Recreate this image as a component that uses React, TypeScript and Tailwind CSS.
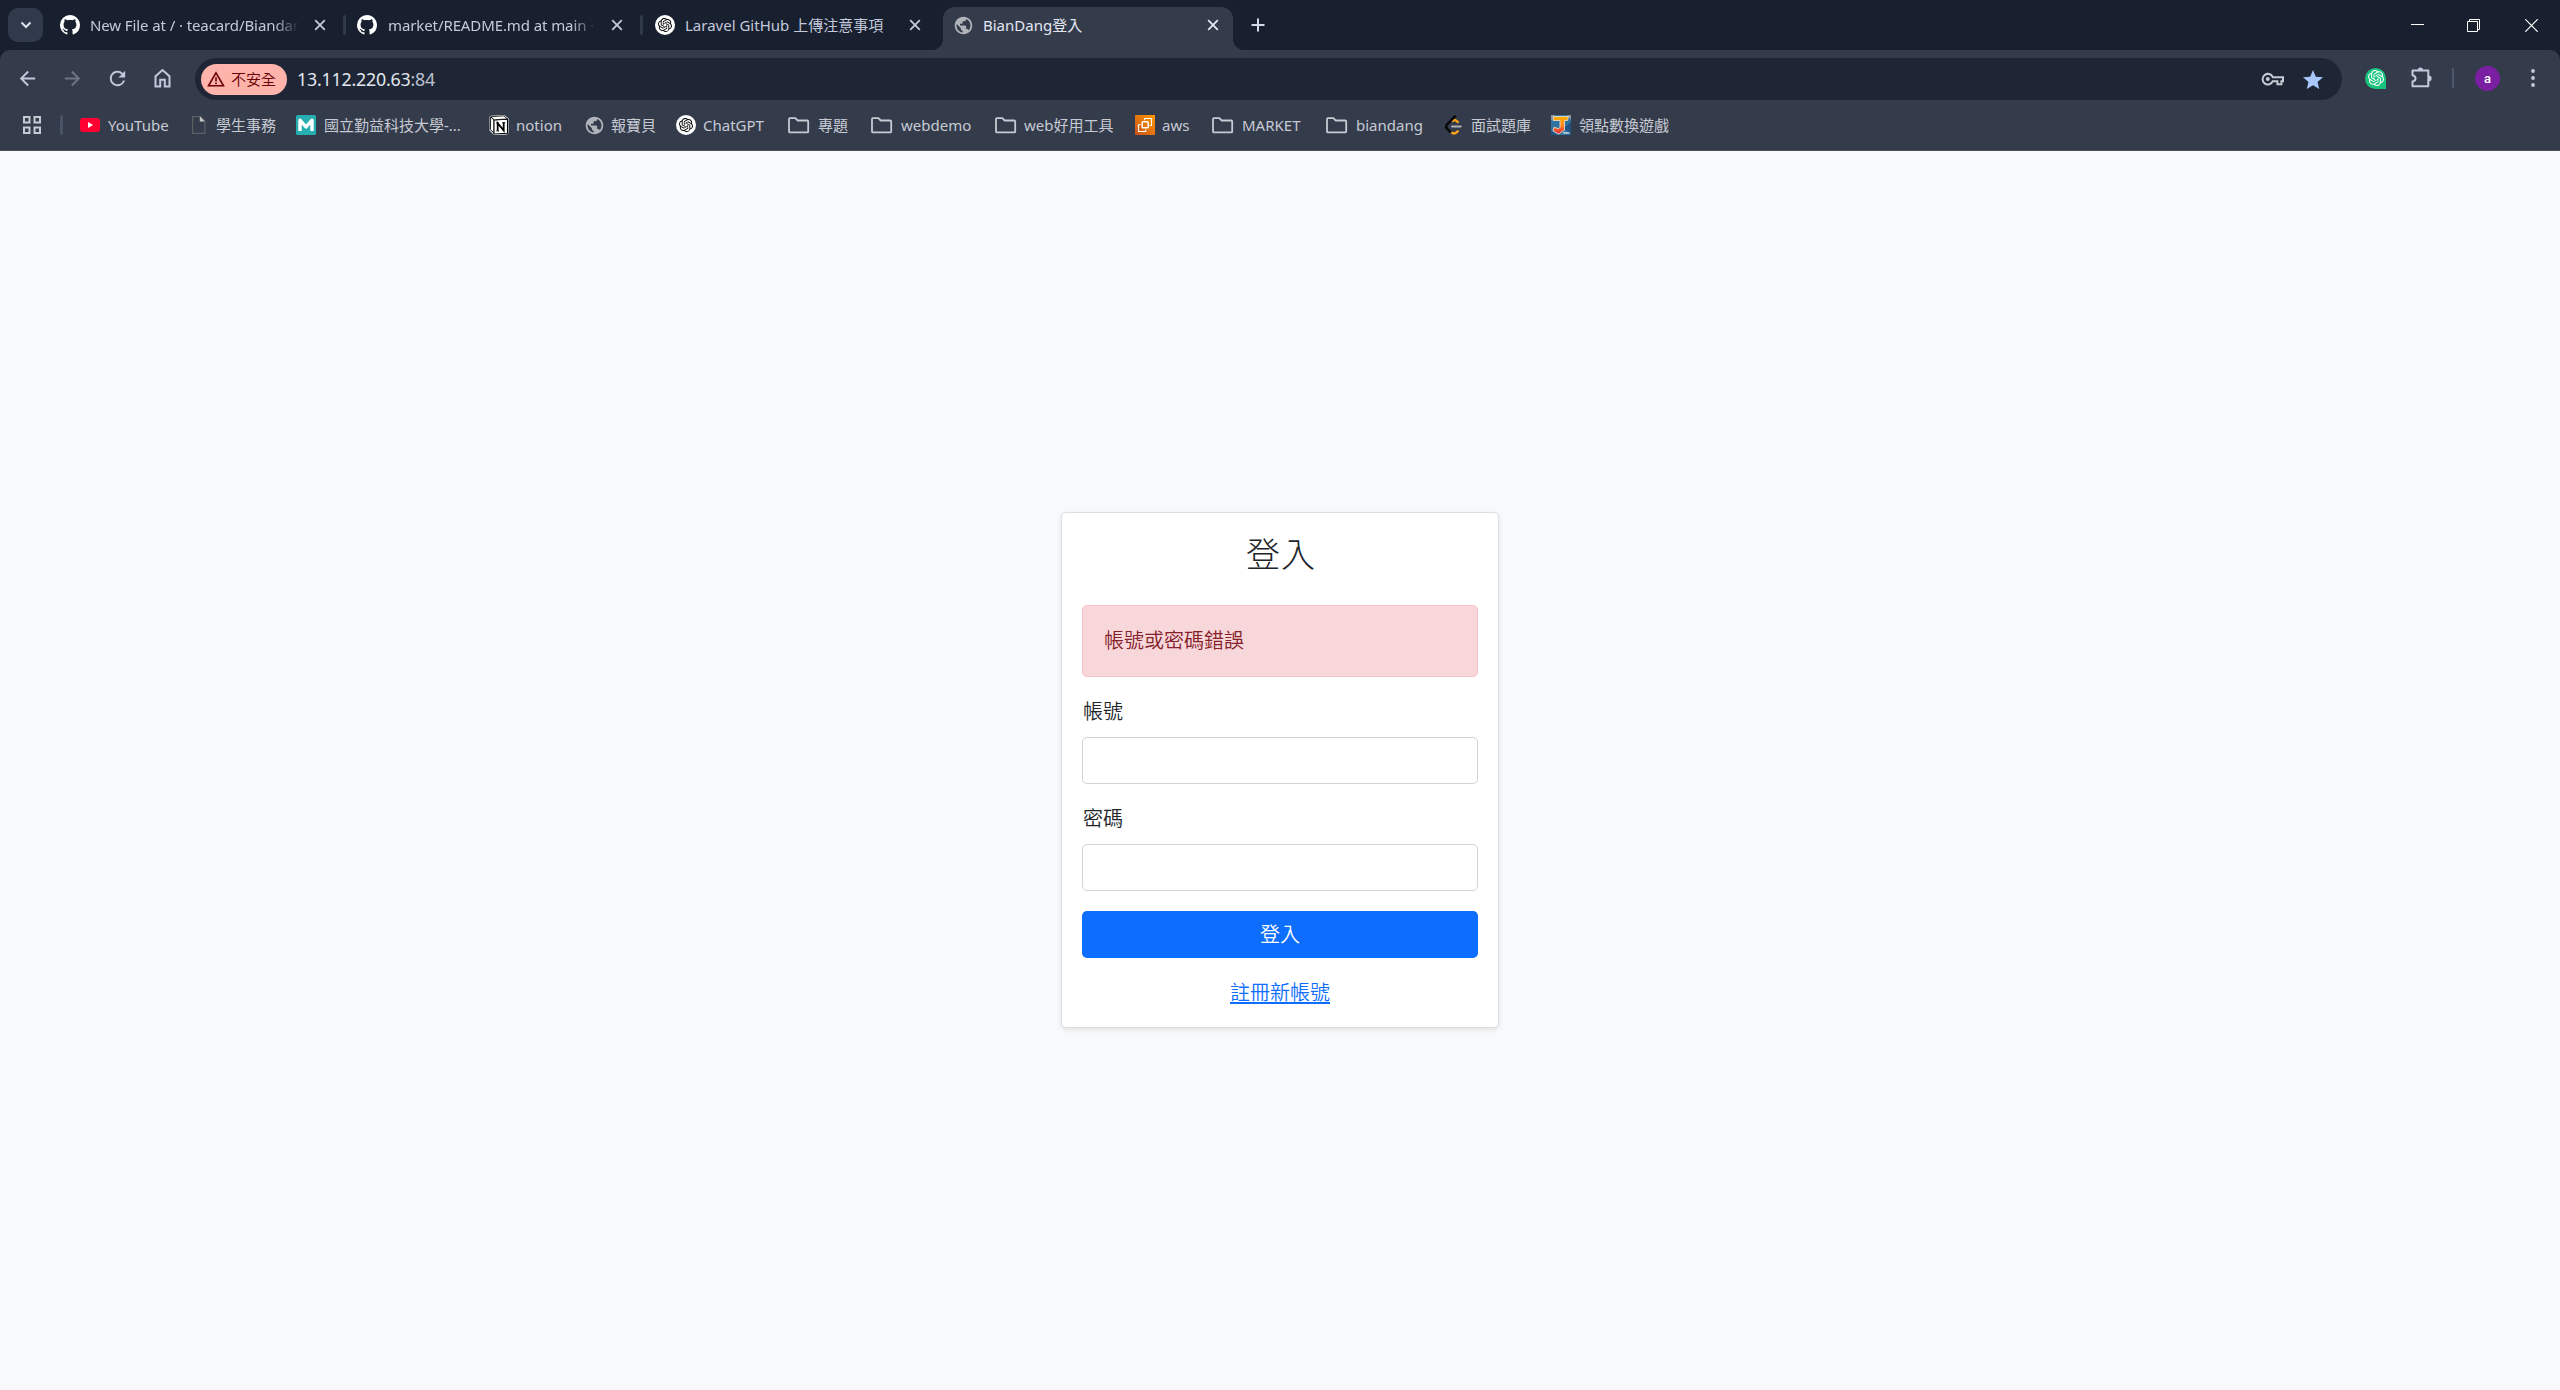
import React from "react";
import { SiOpenai } from "react-icons/si";
import { VscGithubInverted } from "react-icons/vsc";
import { MdPublic, MdArrowBack, MdArrowForward, MdRefresh, MdStar } from "react-icons/md";

function Cross({ className = "" }: { className?: string }) {
  return (
    <svg viewBox="0 0 12 12" className={`h-3 w-3 shrink-0 ${className}`} stroke="currentColor" strokeWidth="1.8" fill="none">
      <path d="M1.2 1.2l9.6 9.6M10.8 1.2l-9.6 9.6" />
    </svg>
  );
}

function OpenAiBadge() {
  return (
    <span className="flex h-5 w-5 shrink-0 items-center justify-center rounded-full bg-white text-black">
      <SiOpenai className="h-[14px] w-[14px]" />
    </span>
  );
}

function GlobeIcon() {
  return (
    <span className="flex h-5 w-5 shrink-0 items-center justify-center">
      <MdPublic className="h-[21px] w-[21px] shrink-0 text-[#b0b3ba]" />
    </span>
  );
}

function FolderIcon() {
  return (
    <svg viewBox="0 0 22 20" className="h-5 w-[22px] shrink-0" fill="none" stroke="#c7cad3" strokeWidth="1.8" strokeLinejoin="round">
      <path d="M1 4.200q0-1 1-1h5.400l2.300 2.300h9.500q1 0 1 1v9.900q0 1-1 1H2q-1 0-1-1z" />
    </svg>
  );
}

function YouTubeIcon() {
  return (
    <svg viewBox="0 0 20 20" className="h-5 w-5 shrink-0">
      <rect x="0" y="3" width="20" height="14" rx="3" fill="#ff0033" />
      <path d="M8 7l5 3-5 3z" fill="#fff" />
    </svg>
  );
}

function FileIcon() {
  return (
    <svg viewBox="0 0 20 20" className="h-5 w-5 shrink-0" fill="none">
      <path d="M3.600 1.600h8l4.300 4.300v12.500H3.600z" stroke="#5d5f63" strokeWidth="1.200" />
      <path d="M10.800 1.200v5.200h5z" fill="#c8c8c8" />
    </svg>
  );
}

function MyIcon() {
  return (
    <svg viewBox="0 0 20 20" className="h-5 w-5 shrink-0">
      <rect width="20" height="20" rx="1.500" fill="#27aeb1" />
      <path d="M4 16V5.200L10 12l6-6.800V16" fill="none" stroke="#fff" strokeWidth="3.400" strokeLinejoin="round" />
    </svg>
  );
}

function NotionIcon() {
  return (
    <svg viewBox="0 0 20 20" className="h-5 w-5 shrink-0">
      <path d="M1.500.8L15 0l4.500 3.200V18L18 19.400 5 20 .6 15.500V1.800z" fill="#fff" />
      <path d="M1.700 2l3.400 3v13.300L1.400 14.600z" fill="#fff" stroke="#000" strokeWidth=".9" />
      <path d="M5 5l13.500-.8v14L5 19z" fill="#fff" stroke="#000" strokeWidth="1.100" />
      <path d="M1.700 1.700L14.800.9l3.700 3L5.200 4.800z" fill="#fff" stroke="#000" strokeWidth=".8" />
      <path d="M8.700 15.700V8.200l6 7.200V7.800" fill="none" stroke="#000" strokeWidth="1.800" />
      <path d="M7.200 8h2.600M13.200 7.700h3M7.400 15.900h2.700" stroke="#000" strokeWidth="1" />
    </svg>
  );
}

function AwsIcon() {
  return (
    <svg viewBox="0 0 20 20" className="h-5 w-5 shrink-0">
      <defs>
        <linearGradient id="aws" x1="0" y1="1" x2="1" y2="0">
          <stop offset="0" stopColor="#c8511b" />
          <stop offset="1" stopColor="#ff9900" />
        </linearGradient>
      </defs>
      <rect width="20" height="20" fill="url(#aws)" />
      <g fill="none" stroke="#fff" strokeWidth="1.100">
        <rect x="7.200" y="6.800" width="6" height="6" rx=".8" strokeWidth="1.500" />
        <path d="M5.600 9.800H3.500v6.700h7.200v-2M9.500 5.200V3.500h7v7h-2" />
      </g>
    </svg>
  );
}

function LeetIcon() {
  return (
    <svg viewBox="0 0 20 20" className="h-5 w-5 shrink-0" fill="none" strokeWidth="2.400" strokeLinecap="round">
      <path d="M12.800 7l-1.700-1.400q-1.600-1.200-3.400.3" stroke="#ffa116" />
      <path d="M12.800 16.300q-2.800 3.200-5.600 1.600" stroke="#ffa116" />
      <path d="M10 1.400L2 9.500q-1.800 2 0 4l3 3.200" stroke="#050505" />
      <path d="M7 11.500h8.800" stroke="#b3b3b3" strokeWidth="1.800" />
    </svg>
  );
}

function GameIcon() {
  return (
    <svg viewBox="0 0 20 20" className="h-5 w-5 shrink-0">
      <defs>
        <linearGradient id="game" x1="0" y1="0" x2="0" y2="1">
          <stop offset="0" stopColor="#ffb000" />
          <stop offset=".5" stopColor="#ff8a1f" />
          <stop offset="1" stopColor="#e3223f" />
        </linearGradient>
      </defs>
      <rect width="20" height="20" fill="#2f73a0" />
      <path d="M0 0h4L0 6zM16 0h4v5z" fill="#8b979b" />
      <path d="M0 15l6 5H0zM13 13l7-6v13z" fill="#1f5480" />
      <path d="M2.500 1.500h15l-1 4h-3v9.500l-5.700 4L2 16l1-3.800 4.500 1.500 1.500-1.500V5.500H2z" fill="url(#game)" stroke="#f6e3d0" strokeWidth=".8" />
      <path d="M12.500 17.800h6" stroke="#e6edf2" strokeWidth="1.800" strokeDasharray="1.400 .5" />
    </svg>
  );
}

const bookmarks: { icon: React.ReactNode; text: string; item: string }[] = [
  { icon: <YouTubeIcon />, text: "YouTube", item: "w-[109px] gap-2" },
  { icon: <FileIcon />, text: "學生事務", item: "w-[107px] gap-[7px]" },
  { icon: <MyIcon />, text: "國立勤益科技大學-...", item: "w-[193px] gap-2" },
  { icon: <NotionIcon />, text: "notion", item: "w-[95px] gap-[7px]" },
  { icon: <GlobeIcon />, text: "報寶貝", item: "w-[92px] gap-[7px]" },
  { icon: <OpenAiBadge />, text: "ChatGPT", item: "w-[112px] gap-[7px]" },
  { icon: <FolderIcon />, text: "專題", item: "w-[83px] gap-2" },
  { icon: <FolderIcon />, text: "webdemo", item: "w-[124px] gap-2" },
  { icon: <FolderIcon />, text: "web好用工具", item: "w-[140px] gap-[7px]" },
  { icon: <AwsIcon />, text: "aws", item: "w-[77px] gap-[7px]" },
  { icon: <FolderIcon />, text: "MARKET", item: "w-[114px] gap-2" },
  { icon: <FolderIcon />, text: "biandang", item: "w-[119px] gap-2" },
  { icon: <LeetIcon />, text: "面試題庫", item: "w-[106px] gap-[6px]" },
  { icon: <GameIcon />, text: "領點數換遊戲", item: "w-[130px] gap-2" },
];

function TabStrip() {
  return (
    <div className="flex h-[50px] items-center bg-[#18202f] text-[15px] text-[#c3c9dc]">
      <div className="ml-2 flex h-[34px] w-[35px] items-center justify-center rounded-[10px] bg-[#313a4a] text-[#dde2f0]">
        <svg viewBox="0 0 12 8" className="h-2 w-3" fill="none" stroke="currentColor" strokeWidth="2">
          <path d="M1.500 1.500L6 6l4.500-4.500" />
        </svg>
      </div>
      <div className="ml-[17px] flex w-[283px] items-center">
        <VscGithubInverted className="h-5 w-5 shrink-0 text-white" />
        <span className="ml-[10px] w-[209px] overflow-hidden whitespace-nowrap tracking-[-0.1px] [mask-image:linear-gradient(to_right,black_88%,transparent)]">
          New File at / · teacard/Biandang
        </span>
        <Cross className="ml-[15px]" />
      </div>
      <div className="h-5 w-[3px] rounded-full bg-[#2f3949]" />
      <div className="ml-[11px] flex w-[283px] items-center">
        <VscGithubInverted className="h-5 w-5 shrink-0 text-white" />
        <span className="ml-[11px] w-[208px] overflow-hidden whitespace-nowrap tracking-[-0.1px] [mask-image:linear-gradient(to_right,black_88%,transparent)]">
          market/README.md at main ·
        </span>
        <Cross className="ml-[15px]" />
      </div>
      <div className="h-5 w-[3px] rounded-full bg-[#2f3949]" />
      <div className="ml-[12px] flex w-[276px] items-center">
        <OpenAiBadge />
        <span className="ml-[10px] w-[224px] overflow-hidden whitespace-nowrap">Laravel GitHub 上傳注意事項</span>
        <Cross />
      </div>
      <div className="flex h-full w-[314px] shrink-0 items-end">
        <div className="h-3 w-3 bg-[radial-gradient(circle_at_0_0,transparent_12px,#343c4c_12.5px)]" />
        <div className="flex h-[43px] w-[290px] items-center rounded-t-[12px] bg-[#343c4c] pb-[7px] pl-[10px] text-[#e3e7f2]">
          <GlobeIcon />
          <span className="ml-[10px] w-[224px] whitespace-nowrap">BianDang登入</span>
          <Cross />
        </div>
        <div className="h-3 w-3 bg-[radial-gradient(circle_at_100%_0,transparent_12px,#343c4c_12.5px)]" />
      </div>
      <svg viewBox="0 0 14 14" className="ml-[6px] h-[14px] w-[14px]" stroke="#d5daea" strokeWidth="2">
        <path d="M7 .5v13M.5 7h13" />
      </svg>
      <div className="ml-auto mr-[22px] flex items-center text-white">
        <svg viewBox="0 0 13 13" className="h-[13px] w-[13px]" stroke="currentColor">
          <path d="M0 5.500h13" />
        </svg>
        <svg viewBox="0 0 13 13" className="ml-[43px] mr-[45px] h-[13px] w-[13px]" stroke="currentColor" fill="none">
          <path d="M.5 2.500h10v10H.5zM2.500 2.500v-2h10v10h-2" />
        </svg>
        <svg viewBox="0 0 13 13" className="h-[13px] w-[13px]" stroke="currentColor" strokeWidth="1.200">
          <path d="M.3.3l12.400 12.400M12.700.3L.3 12.700" />
        </svg>
      </div>
    </div>
  );
}

function Toolbar() {
  return (
    <div className="flex h-[56px] items-center text-[#c3c9dc]">
      <div className="ml-4 flex items-center gap-[22px]">
        <MdArrowBack className="h-[23px] w-[23px]" />
        <MdArrowForward className="h-[23px] w-[23px] text-[#6d7585]" />
        <MdRefresh className="h-[23px] w-[23px]" />
        <svg viewBox="0 0 23 23" className="h-[23px] w-[23px]" fill="none" stroke="currentColor" strokeWidth="2">
          <path d="M4.500 9.200l7-6.200 7 6.200v10.300h-4.700v-6.800h-4.600v6.800H4.500z" />
        </svg>
      </div>
      <div className="ml-[21px] mt-[2px] flex h-[42px] w-[2147px] items-center rounded-full bg-[#1e2636]">
        <div className="ml-[6px] flex h-[31px] w-[86px] items-center rounded-full bg-[#ffb4ab] pl-[6px] text-[#690005]">
          <svg viewBox="0 0 18 16" className="h-4 w-[18px] shrink-0" fill="none" stroke="currentColor" strokeWidth="1.600">
            <path d="M9 1.800L16.500 14.800h-15z" />
            <path d="M9 6.200v4.200M9 11.600v1.700" />
          </svg>
          <span className="ml-[6px] whitespace-nowrap pt-px text-[15px] font-[350]">不安全</span>
        </div>
        <span className="ml-[10px] text-[17.8px] tracking-[-0.2px] text-[#e3e7ee]">13.112.220.63<span className="text-[#bcc2cf]">:84</span></span>
        <svg viewBox="0 0 23 14" className="ml-auto h-[14px] w-[23px]" fill="none" stroke="#c7cad3" strokeWidth="2">
          <path d="M11.800 5.200H22v4h-1.600v3h-4v-3h-4.600a5.300 5.300 0 1 1 0-4z" />
          <circle cx="6.800" cy="7" r="2" fill="#c7cad3" stroke="none" />
        </svg>
        <MdStar className="ml-[17px] mr-[17px] mt-[2px] h-6 w-6 text-[#a8c7fa]" />
      </div>
      <div className="ml-[23px] flex items-center">
        <span className="flex h-[21px] w-[21px] items-center justify-center rounded-full rounded-br-none bg-[#19c37d] text-white">
          <SiOpenai className="h-4 w-4" />
        </span>
        <svg viewBox="0 0 22 22" className="ml-[24px] h-[22px] w-[22px]">
          <path d="M2.500 3.500h15.800v15.800H2.500v-4.800q3-.6 3-3.100t-3-3.100z" fill="none" stroke="#c3c9dc" strokeWidth="2" strokeLinejoin="round" />
          <path d="M7.800 3a2.600 2.600 0 0 1 5.200 0zM18.800 8.600a2.800 2.800 0 0 1 0 5.600z" fill="#c3c9dc" />
        </svg>
        <div className="ml-[20px] h-5 w-[2px] bg-[#4d566a]" />
        <span className="ml-[21px] flex h-[25px] w-[25px] items-center justify-center rounded-full bg-[#7b1fa2] font-[Roboto] text-[13px] font-medium leading-none text-white">a</span>
        <svg viewBox="0 0 4 18" className="ml-[31px] h-[18px] w-1" fill="#c3c9dc">
          <circle cx="2" cy="2" r="1.900" />
          <circle cx="2" cy="9" r="1.900" />
          <circle cx="2" cy="16" r="1.900" />
        </svg>
      </div>
    </div>
  );
}

function BookmarkBar() {
  return (
    <div className="flex h-[44px] items-center pb-[6px] text-[15px] text-[#c7cad3]">
      <svg viewBox="0 0 18 18" className="ml-[23px] h-[18px] w-[18px]" fill="none" stroke="currentColor" strokeWidth="2">
        <path d="M1 1h5.500v5.500H1zM11.500 1H17v5.500h-5.500zM1 11.500h5.500V17H1zM11.500 11.500H17V17h-5.500z" />
      </svg>
      <div className="ml-[19px] mr-[17px] h-5 w-[3px] rounded-full bg-[#4a5365]" />
      {bookmarks.map((b) => (
        <div key={b.text} className={`flex shrink-0 items-center whitespace-nowrap ${b.item}`}>
          {b.icon}
          <span>{b.text}</span>
        </div>
      ))}
    </div>
  );
}

function LoginCard() {
  return (
    <div className="flex w-[438px] flex-col rounded-[5px] border border-[#dddee0] bg-white px-5 pb-[19px] text-[20px] font-[350] text-[#212529] shadow-[0_2px_5px_rgba(0,0,0,0.09)]">
      <h1 className="mt-5 pl-[2px] text-center text-[34px] font-light leading-[42px] tracking-[1px]">登入</h1>
      <div className="mt-[30px] flex h-[72px] items-center rounded-[5px] border border-[#f5c2c7] bg-[#f8d7da] px-[21px] text-[#842029]">
        帳號或密碼錯誤
      </div>
      <label className="mt-5 pl-px leading-[30px]">帳號</label>
      <input className="mt-[10px] h-[47px] rounded-[5px] border border-[#ced4da] bg-white" />
      <label className="mt-5 pl-px leading-[30px]">密碼</label>
      <input type="password" className="mt-[10px] h-[47px] rounded-[5px] border border-[#ced4da] bg-white" />
      <button className="mt-5 h-[47px] rounded-[5px] bg-[#0d6efd] text-white">登入</button>
      <a className="mt-5 self-center leading-[30px] text-[#0d6efd] underline decoration-[2px] underline-offset-[2px]">註冊新帳號</a>
    </div>
  );
}

export default function App() {
  return (
    <div className="flex h-[1390px] w-[2560px] flex-col overflow-hidden bg-[#18202f] font-['Noto_Sans','Noto_Sans_CJK_TC',sans-serif]">
      <TabStrip />
      <div className="h-[101px] rounded-t-[10px] border-b border-[#494b55] bg-[#343c4c]">
        <Toolbar />
        <BookmarkBar />
      </div>
      <div className="flex flex-1 items-center justify-center bg-[#f8f9fa] pb-px">
        <LoginCard />
      </div>
    </div>
  );
}
